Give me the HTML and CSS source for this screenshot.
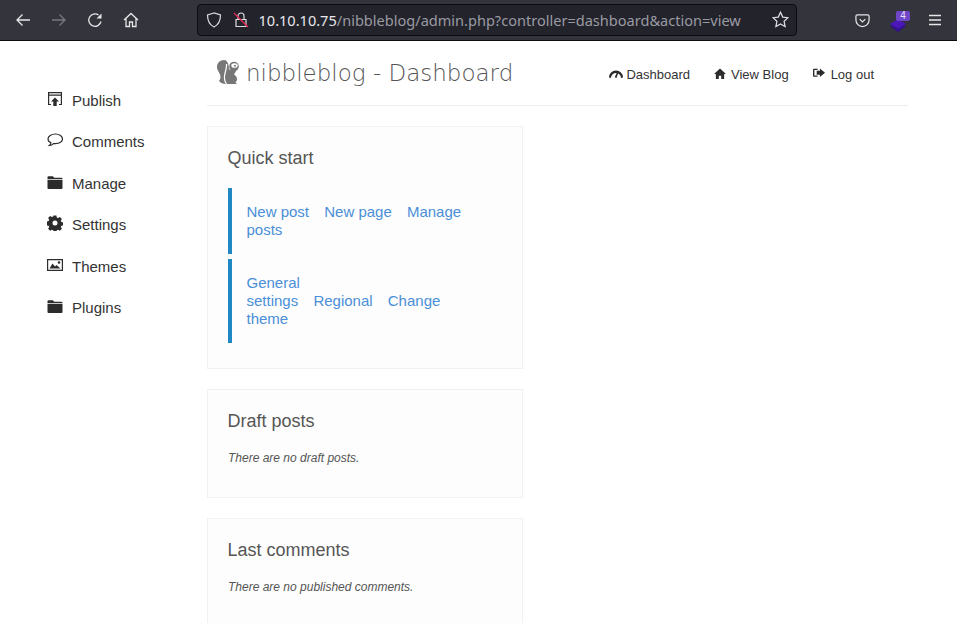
FILE: index.html
```html
<!DOCTYPE html>
<html lang="en">
<head>
<meta charset="utf-8">
<title>nibbleblog - Dashboard</title>
<link rel="stylesheet" href="styles.css">
</head>
<body>
<header class="toolbar">
  <nav class="tb-nav">
    <svg class="tb-icon" viewBox="0 0 16 16"><path d="M15 8H2M7.500 2.500 2 8l5.500 5.500"/></svg>
    <svg class="tb-icon dim" viewBox="0 0 16 16"><path d="M1 8h13M8.500 2.500 14 8l-5.500 5.500"/></svg>
    <svg class="tb-icon" viewBox="0 0 16 16"><path d="M14 9.500A6.200 6.200 0 1 1 11.500 3"/><path class="fill" d="M14.500 1.500v5h-5z"/></svg>
    <svg class="tb-icon" viewBox="0 0 16 16"><path d="M1 8 8 1.500 15 8M3 6.500V14.500h3.500V10h3v4.500H13V6.500"/></svg>
  </nav>
  <div class="urlbar">
    <svg class="ub-icon" viewBox="0 0 16 16"><path d="M8 1 1.500 3c0 6 1.500 9.500 6.500 12 5-2.500 6.500-6 6.500-12z"/></svg>
    <svg class="ub-icon lock" viewBox="0 0 16 16"><path d="M5 7V4a3 3 0 0 1 6 0v3M3 7.500h10v7H3z"/><path class="slash" d="M1 1l14 14"/></svg>
    <span class="url"><span class="host">10.10.10.75</span>/nibbleblog/admin.php?controller=dashboard&amp;action=view</span>
    <svg class="ub-icon star" viewBox="0 0 16 16"><path d="M8 1.200l2.100 4.500 4.900.6-3.600 3.400.9 4.900L8 12.200l-4.300 2.400.9-4.900L1 6.300l4.900-.6z"/></svg>
  </div>
  <div class="tb-right">
    <svg class="tb-icon pocket" viewBox="0 0 16 16"><path d="M2.500 2h11A1.500 1.500 0 0 1 15 3.500V7.500a7 7 0 0 1-14 0V3.500A1.500 1.500 0 0 1 2.500 2z"/><path d="M5 6.500l3 3 3-3"/></svg>
    <div class="ext">
      <svg class="ext-stack" viewBox="0 0 16 13"><path class="layer-back" d="M8 0l8 5-8 5-8-5z"/><path d="M0 7l2-1 6 4 6-4 2 1-8 6z"/></svg>
      <span class="ext-badge">4</span>
    </div>
    <svg class="tb-icon menu" viewBox="0 0 12 12"><path d="M0 1.500h12M0 6h12M0 10.500h12"/></svg>
  </div>
</header>
<div class="page">
  <aside class="sidebar">
    <a class="side-link"><svg class="side-icon" viewBox="0 0 16 16"><path class="open" d="M4 13.500H1.600V1.600h12.800v11.900H12M1.600 4.200h12.800"/><path d="M8 6.500l4 4H9.700V15H6.300v-4.500H4z"/></svg>Publish</a>
    <a class="side-link"><svg class="side-icon" viewBox="0 0 16 16"><path class="open" d="M8.500 2C4.300 2 1 4.200 1 7c0 1.600 1.100 2.900 2.900 3.800-.2 1-.7 2-1.500 2.700 1.700-.2 3.100-.9 4.100-1.900.6.100 1.200.1 2 .1 4 0 7-2.100 7-4.700S12.500 2 8.500 2z"/></svg>Comments</a>
    <a class="side-link"><svg class="side-icon" viewBox="0 0 16 16"><path d="M.5 4.500V3.200a1 1 0 0 1 1-1h4.300l1.400 1.500h7.300a1 1 0 0 1 1 1V5H.5zM.5 5.700h15V14a1 1 0 0 1-1 1h-13a1 1 0 0 1-1-1z"/></svg>Manage</a>
    <a class="side-link"><svg class="side-icon" viewBox="0 0 16 16"><path fill-rule="evenodd" d="M6.600.5h2.800l.4 2 1.300.6 1.800-1.100 2 2-1.100 1.800.6 1.300 2 .4v2.800l-2 .4-.6 1.300 1.100 1.800-2 2-1.800-1.100-1.300.6-.4 2H6.600l-.4-2-1.300-.6-1.800 1.100-2-2 1.100-1.800-.6-1.300-2-.4V6.500l2-.4.6-1.300L1.100 3l2-2 1.800 1.100 1.300-.6zM8 5.500a2.500 2.500 0 1 0 0 5 2.500 2.500 0 0 0 0-5z"/></svg>Settings</a>
    <a class="side-link"><svg class="side-icon" viewBox="0 0 16 16"><path fill-rule="evenodd" d="M0 2h16v12H0zm1.200 1.200v9.600h13.600V3.200z"/><circle cx="12" cy="5.500" r="1.300"/><path d="M2.500 11.500l3-5 2.500 3 1.500-1.500 4 3.500z"/></svg>Themes</a>
    <a class="side-link"><svg class="side-icon" viewBox="0 0 16 16"><path d="M.5 4.500V3.200a1 1 0 0 1 1-1h4.300l1.400 1.500h7.300a1 1 0 0 1 1 1V5H.5zM.5 5.700h15V14a1 1 0 0 1-1 1h-13a1 1 0 0 1-1-1z"/></svg>Plugins</a>
  </aside>
  <main class="content">
    <div class="topbar">
      <div class="brand">
        <svg class="logo" viewBox="0 0 22 24"><path d="M7 0C3 0 0 3 0 7c0 4 3.500 6 3.500 10 0 2-1 3-1.500 4 1.500 2 4 3 7 3h11l-1.500-1.500c1.500-1.500 2-3.500 1-5.500-.6-1.200-1.500-2-2.500-2.500l2-3.500-1-1.500h-6C12 9 12 6 11 3.500 10 1 9 0 7 0z"/><path class="logo-line" d="M9.500 4C10 8 8 12 7.500 16c-.3 3 .5 6 2 8"/><circle cx="17" cy="6.500" r="4.800"/><ellipse class="logo-eye" cx="17.500" cy="5.500" rx="3.200" ry="2.300"/><circle cx="18" cy="5.800" r="1"/></svg>
        <span class="brand-text">nibbleblog - Dashboard</span>
      </div>
      <nav class="top-nav">
        <a class="top-link"><svg class="top-icon wide" viewBox="0 0 14 14"><path d="M0 11.500a7 7 0 0 1 14 0l-2 .5a5 5 0 0 0-10 0z"/><path d="M5.800 11.200 8.500 5l1.200.5L7.500 12z"/></svg>Dashboard</a>
        <a class="top-link"><svg class="top-icon" viewBox="0 0 13 13"><path d="M6.500 1.500 0 7.500h2V13h3.200V9.500h2.600V13H11V7.500h2z"/></svg>View Blog</a>
        <a class="top-link"><svg class="top-icon logout" viewBox="0 0 13 13"><path d="M5 2H1.200A1 1 0 0 0 0 3v6.500a1 1 0 0 0 1.200 1H5V9.200H1.500V3.300H5z"/><path d="M7.500 1.500 13 6.200l-5.500 4.700V8.500H4V4h3.500z"/></svg>Log out</a>
      </nav>
    </div>
    <section class="card card-quick">
      <h3 class="card-title">Quick start</h3>
      <div class="quick-block">
        <a class="qlink">New post</a> <a class="qlink">New page</a> <a class="qlink">Manage posts</a>
      </div>
      <div class="quick-block">
        <a class="qlink">General<br>settings</a> <a class="qlink">Regional</a> <a class="qlink">Change theme</a>
      </div>
    </section>
    <section class="card">
      <h3 class="card-title">Draft posts</h3>
      <p class="empty">There are no draft posts.</p>
    </section>
    <section class="card">
      <h3 class="card-title">Last comments</h3>
      <p class="empty">There are no published comments.</p>
    </section>
  </main>
</div>
</body>
</html>
```
FILE: styles.css
```css
* { box-sizing: border-box; }
html, body { margin: 0; height: 100%; overflow: hidden; background: #fff; }
body { font-family: "Liberation Sans", Arial, sans-serif; color: #333; font-size: 15px; }

.toolbar { height: 41px; background: #33343c; border-bottom: 1px solid #0c0c0d; display: flex; align-items: center; }
.tb-nav { display: flex; width: 197px; padding-left: 15px; gap: 20px; flex: none; }
.tb-icon { width: 16px; height: 16px; fill: none; stroke: #e6e6e8; stroke-width: 1.300; flex: none; }
.tb-icon.dim { stroke: #77787d; }
.tb-icon .fill { fill: #e6e6e8; stroke: none; }
.urlbar { width: 600px; height: 32px; margin-top: -1px; background: #23232c; border: 1px solid #0c0c10; border-radius: 4px; display: flex; align-items: center; padding-left: 8px; padding-right: 7px; flex: none; }
.ub-icon { width: 16px; height: 16px; fill: none; stroke: #dcdce0; stroke-width: 1.200; flex: none; }
.ub-icon.lock { margin-left: 11px; }
.ub-icon .slash { stroke: #e22850; stroke-width: 1.400; }
.ub-icon.star { margin-left: auto; width: 17px; height: 17px; }
.url { margin-left: 9.500px; font-family: "Noto Sans", sans-serif; font-size: 14.550px; color: #9a9aa2; white-space: nowrap; }
.host { color: #e8e8ec; }
.tb-right { display: flex; align-items: center; margin-left: 58px; }
.pocket { width: 15px; height: 15px; }
.ext { position: relative; width: 21px; height: 26px; margin-left: 20px; margin-top: 2px; }
.ext-stack { position: absolute; left: 0; top: 11px; width: 16px; height: 13px; fill: #33108f; }
.ext-stack .layer-back { fill: #4a18b8; }
.ext-badge { position: absolute; left: 6px; top: 3px; width: 14px; height: 10px; background: #7046c8; border-radius: 2px; color: #e8e0f8; font-size: 10px; line-height: 10px; text-align: center; }
.menu { width: 12px; height: 12px; margin-left: 18px; }

.page { display: flex; }
.sidebar { width: 207px; padding: 38.600px 0 0 46.500px; display: flex; flex-direction: column; flex: none; }
.side-link { display: flex; align-items: center; height: 41.500px; color: #333; font-size: 15px; }
.side-icon { width: 16px; height: 16px; margin-right: 9.500px; fill: #2c2c2c; margin-top: -3px; flex: none; }
.side-icon .open { fill: none; stroke: #2c2c2c; stroke-width: 1.200; }

.content { width: 701px; flex: none; }
.topbar { height: 65px; border-bottom: 1px solid #eee; display: flex; align-items: center; margin-bottom: 20px; }
.brand { display: flex; align-items: center; padding-left: 10px; }
.logo { width: 22px; height: 24px; fill: #777; margin-right: 7px; margin-top: -2px; flex: none; }
.logo-eye { fill: #fff; }
.logo-line { fill: none; stroke: #fff; stroke-width: 1.200; }
.brand-text { font-family: "DejaVu Sans", sans-serif; font-weight: 200; font-size: 23px; color: #555; }
.top-nav { margin-left: auto; display: flex; gap: 24px; padding-right: 34px; padding-top: 2px; }
.top-link { display: flex; align-items: center; font-size: 13px; color: #333; }
.top-icon { width: 12px; height: 12px; margin-right: 5px; fill: #2c2c2c; margin-top: -3px; flex: none; }
.top-icon.wide { width: 14px; height: 14px; margin-right: 3px; }
.top-icon.logout { margin-right: 6px; }

.card { width: 316px; background: #fdfdfd; border: 1px solid #f1f1f1; padding: 21px 20px 20px; margin-bottom: 20px; height: 109px; }
.card-quick { height: 243px; }
.card-title { margin: 0; font-weight: 400; font-size: 18px; line-height: 20px; color: #555; margin-left: -0.500px; }
.quick-block { border-left: 4px solid #1f87c2; padding: 15px 14px 15px 14.500px; margin-top: 20px; line-height: 18px; }
.quick-block + .quick-block { margin-top: 5px; }
.qlink { color: #4a8fd8; font-size: 15px; margin-right: 11px; }
.empty { margin: 18px 0 0; font-size: 12px; font-style: italic; color: #555; line-height: 18px; }
```
